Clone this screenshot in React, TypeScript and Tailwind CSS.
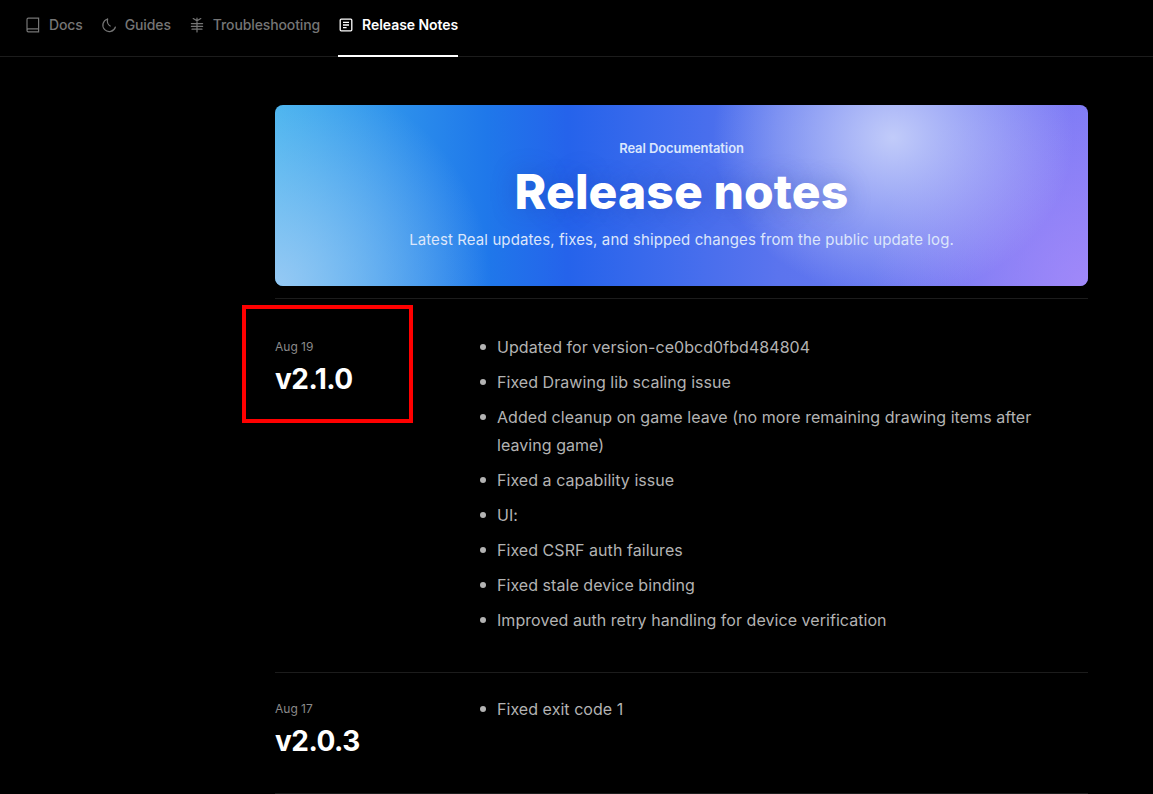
import React from "react";

const Book = () => (
  <svg width="16" height="16" viewBox="0 0 16 16" fill="none" stroke="currentColor" strokeWidth="1.2">
    <path d="M2 13.6V2.6C2 1.8 2.6 1.2 3.4 1.2H13.6v13.6H3.4C2.6 14.8 2 14.2 2 13.4c0-.9.6-1.5 1.4-1.5H13.6" />
  </svg>
);
const Moon = () => (
  <svg width="16" height="16" viewBox="0 0 16 16" fill="none" stroke="currentColor" strokeWidth="1.2" strokeLinecap="round" strokeLinejoin="round">
    <path d="M6.6 2A6.4 6.4 0 1 0 14.4 10" />
    <path d="M6.6 2C6.1 4 6.4 7.4 9.2 9" />
  </svg>
);
const Cactus = () => (
  <svg width="16" height="16" viewBox="0 0 16 16" fill="none" stroke="currentColor" strokeWidth="1.2" strokeLinecap="round">
    <path d="M8 1v14M4.2 1.6 8 3.8l3.8-2.2M2.4 6.6h11.2M2.4 9.4h11.2M3 12.2h10" />
  </svg>
);
const Note = () => (
  <svg width="16" height="16" viewBox="0 0 16 16" fill="none" stroke="currentColor" strokeWidth="1.3">
    <rect x="2.2" y="2.2" width="11.6" height="11.6" rx="1" />
    <path d="M5 5.4h6M5 8h6M5 10.6h3.6" />
  </svg>
);

const tabs = [
  { label: "Docs", icon: <Book />, active: false },
  { label: "Guides", icon: <Moon />, active: false },
  { label: "Troubleshooting", icon: <Cactus />, active: false },
  { label: "Release Notes", icon: <Note />, active: true },
];

const releases = [
  {
    date: "Aug 19",
    version: "v2.1.0",
    items: [
      "Updated for version-ce0bcd0fbd484804",
      "Fixed Drawing lib scaling issue",
      "Added cleanup on game leave (no more remaining drawing items after leaving game)",
      "Fixed a capability issue",
      "UI:",
      "Fixed CSRF auth failures",
      "Fixed stale device binding",
      "Improved auth retry handling for device verification",
    ],
  },
  { date: "Aug 17", version: "v2.0.3", items: ["Fixed exit code 1"] },
];

export default function App() {
  return (
    <div className="relative h-[794px] overflow-hidden bg-black font-['Inter',sans-serif]">
      <header className="flex h-[57px] gap-[18px] border-b border-[#1c1c1c] pl-[25px]">
        {tabs.map((t) => (
          <div
            key={t.label}
            className={`-mb-px flex h-[57px] items-center gap-2 border-b-2 pb-[5px] text-[14px] leading-none ${
              t.active
                ? "border-white font-semibold tracking-[-0.05px] text-white"
                : "border-transparent font-medium tracking-[-0.12px] text-[#757575]"
            }`}
          >
            {t.icon}
            <span>{t.label}</span>
          </div>
        ))}
      </header>

      <main className="pl-[275px] pr-[65px] pt-[48px]">
        <section className="relative flex h-[181px] flex-col items-center overflow-hidden rounded-lg bg-[linear-gradient(90deg,#40b2ee_0%,#1f78ea_26%,#2563eb_36%,#5b74ee_62%,#7b7af5_100%)]">
          <div className="absolute inset-0 bg-[radial-gradient(circle_at_0%_100%,rgba(165,205,245,0.85),rgba(165,205,245,0)_26%),radial-gradient(ellipse_180px_160px_at_76%_18%,rgba(198,208,250,0.95),rgba(198,208,250,0)_100%),radial-gradient(circle_at_100%_100%,rgba(170,140,250,0.8),rgba(170,140,250,0)_26%)]" />
          <p className="relative mt-[36px] text-[13px] font-semibold leading-[15px] tracking-[-0.1px] text-[#dbe7fd]">Real Documentation</p>
          <h1 className="relative mt-[7px] text-[48px] font-extrabold leading-[58px] tracking-[0.1px] text-white [text-shadow:0_0_24px_rgba(30,60,160,0.35)]">Release notes</h1>
          <p className="relative mt-[9px] text-[15px] leading-[20px] tracking-[0.1px] text-[#dce6fb]">
            Latest Real updates, fixes, and shipped changes from the public update log.
          </p>
        </section>

        <div className="mt-3 border-t border-[#1c1c1c]">
          {releases.map((r) => (
            <article key={r.version} className="flex border-b border-[#1c1c1c] pb-[34px] pt-[12px] first:pb-[38px] first:pt-[24px]">
              <div className="w-[200px] shrink-0 pt-[17px]">
                <p className="text-[12px] leading-[14px] text-[#8a8a8a]">{r.date}</p>
                <p className="mt-[7px] text-[28px] font-bold leading-[36px] tracking-[-0.5px] text-white">{r.version}</p>
              </div>
              <ul className="flex-1 pr-[40px] pt-[10px] text-[16px] leading-[28px] tracking-[0.05px] text-[#b3b3b3]">
                {r.items.map((it) => (
                  <li key={it} className="relative mb-[7px] pl-[22px] last:mb-0">
                    <span className="absolute left-[5px] top-[11px] h-[6px] w-[6px] rounded-full bg-[#b3b3b3]" />
                    {it}
                  </li>
                ))}
              </ul>
            </article>
          ))}
        </div>
      </main>

      <div className="pointer-events-none absolute left-[242px] top-[305px] h-[118px] w-[171px] border-4 border-[#ff0000]" />
    </div>
  );
}
